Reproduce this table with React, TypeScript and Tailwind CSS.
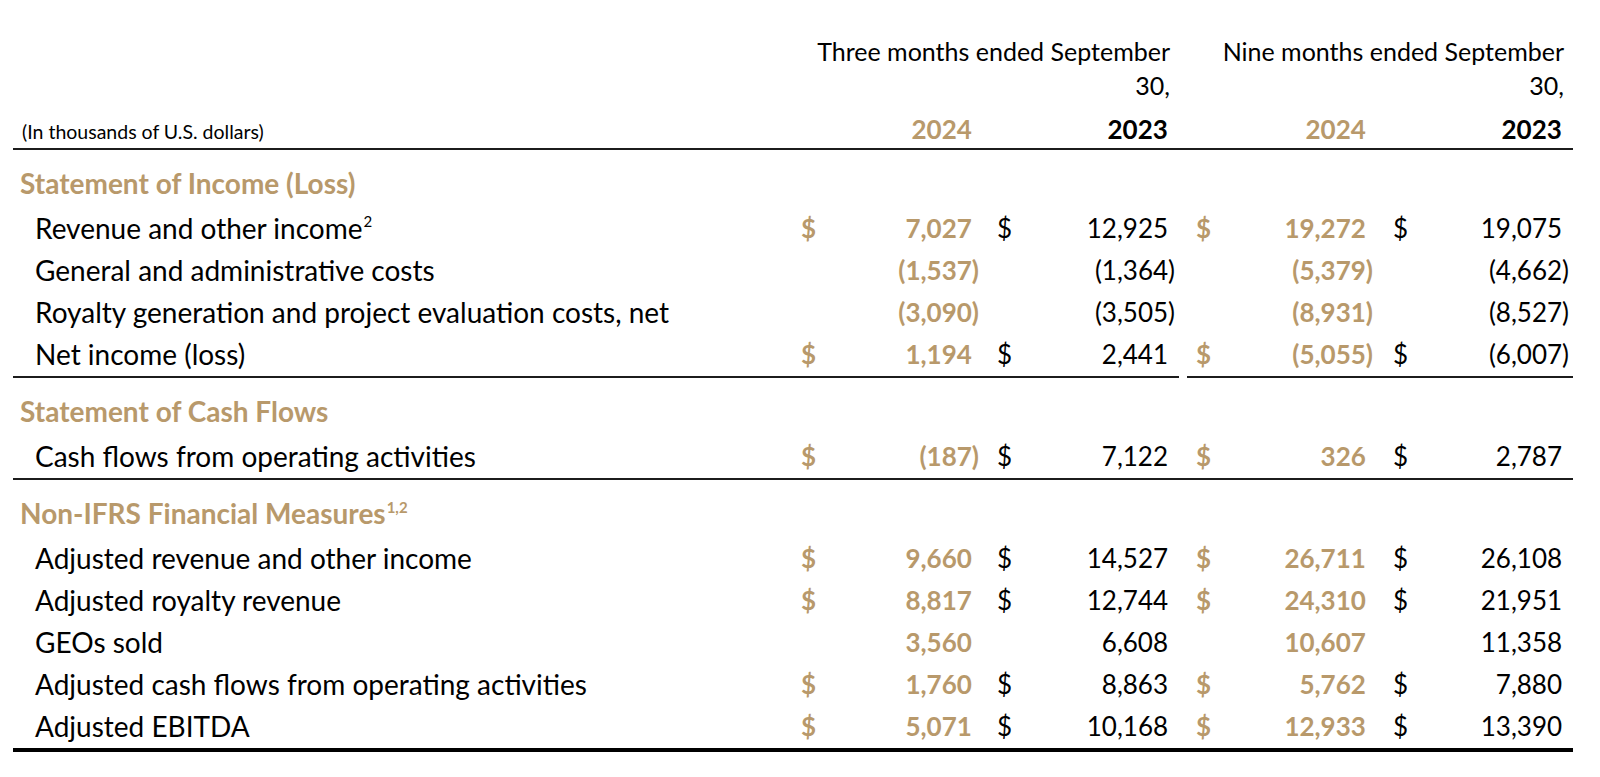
import React from "react";

const COLS =
  "grid grid-cols-[782px_35px_153px_47px_149px_8px_38px_152px_43px_153px]";

type Row = {
  label: string;
  sup?: string;
  cur?: boolean;
  v: [string, string, string, string];
  line?: "split" | "full" | "thick";
};

type Section = { title: string; sup?: string; rows: Row[] };

const sections: Section[] = [
  {
    title: "Statement of Income (Loss)",
    rows: [
      { label: "Revenue and other income", sup: "2", cur: true, v: ["7,027", "12,925", "19,272", "19,075"] },
      { label: "General and administrative costs", v: ["(1,537)", "(1,364)", "(5,379)", "(4,662)"] },
      { label: "Royalty generation and project evaluation costs, net", v: ["(3,090)", "(3,505)", "(8,931)", "(8,527)"] },
      { label: "Net income (loss)", cur: true, v: ["1,194", "2,441", "(5,055)", "(6,007)"], line: "split" },
    ],
  },
  {
    title: "Statement of Cash Flows",
    rows: [
      { label: "Cash flows from operating activities", cur: true, v: ["(187)", "7,122", "326", "2,787"], line: "full" },
    ],
  },
  {
    title: "Non-IFRS Financial Measures",
    sup: "1,2",
    rows: [
      { label: "Adjusted revenue and other income", cur: true, v: ["9,660", "14,527", "26,711", "26,108"] },
      { label: "Adjusted royalty revenue", cur: true, v: ["8,817", "12,744", "24,310", "21,951"] },
      { label: "GEOs sold", v: ["3,560", "6,608", "10,607", "11,358"] },
      { label: "Adjusted cash flows from operating activities", cur: true, v: ["1,760", "8,863", "5,762", "7,880"] },
      { label: "Adjusted EBITDA", cur: true, v: ["5,071", "10,168", "12,933", "13,390"], line: "thick" },
    ],
  },
];

function Num({ v, gold, bold }: { v: string; gold?: boolean; bold?: boolean }) {
  const neg = v.startsWith("(");
  return (
    <div
      className={`flex items-center justify-end pr-[4px] ${gold ? "text-[#b8996b] font-bold" : "text-black"} ${bold ? "font-bold" : ""}`}
    >
      {v}
      {!neg && <span className="invisible">)</span>}
    </div>
  );
}

function Dollar({ show, gold, pl }: { show?: boolean; gold?: boolean; pl: string }) {
  return (
    <div className={`flex items-center ${pl} ${gold ? "text-[#b8996b] font-bold" : "text-black"}`}>
      {show ? "$" : ""}
    </div>
  );
}

function DataRow({ row }: { row: Row }) {
  const split = row.line === "split";
  const cell = split ? "border-b-2 border-[#1c1c1c] pb-[3px]" : "pb-[3px]";
  const rowStyle =
    row.line === "full"
      ? "h-[44px] border-b-2 border-[#1c1c1c]"
      : row.line === "thick"
        ? "h-[46px] border-b-4 border-black"
        : split
          ? "h-[44px]"
          : "h-[42px]";
  return (
    <div className={`${COLS} ${rowStyle}`}>
      <div className={`flex items-center pl-[22px] text-[28px] text-black ${cell}`}>
        <span>
          {row.label}
          {row.sup && <sup className="text-[15px] -top-[0.75em] ml-[1px]">{row.sup}</sup>}
        </span>
      </div>
      <div className={`flex ${cell}`}><Dollar show={row.cur} gold pl="pl-[6px]" /></div>
      <div className={`flex justify-end ${cell}`}><Num v={row.v[0]} gold /></div>
      <div className={`flex ${cell}`}><Dollar show={row.cur} pl="pl-[14px]" /></div>
      <div className={`flex justify-end ${cell}`}><Num v={row.v[1]} /></div>
      <div />
      <div className={`flex ${cell}`}><Dollar show={row.cur} gold pl="pl-[9px]" /></div>
      <div className={`flex justify-end ${cell}`}><Num v={row.v[2]} gold /></div>
      <div className={`flex ${cell}`}><Dollar show={row.cur} pl="pl-[16px]" /></div>
      <div className={`flex justify-end ${cell}`}><Num v={row.v[3]} /></div>
    </div>
  );
}

export default function App() {
  return (
    <div className="w-[1600px] h-[777px] bg-white overflow-hidden [font-family:Lato,'Open_Sans',sans-serif] text-[26px] leading-[30px]">
      <div className="ml-[13px] w-[1560px] pt-[34px]">
        {/* Period headings */}
        <div className={`${COLS} leading-[34px] text-[25px] text-black`}>
          <div />
          <div className="col-span-4 text-right pr-[9px]">
            Three months ended September
            <br />
            30,
          </div>
          <div />
          <div className="col-span-4 text-right pr-[9px]">
            Nine months ended September
            <br />
            30,
          </div>
        </div>

        {/* Year row */}
        <div className={`${COLS} h-[48px] border-b-2 border-[#1c1c1c]`}>
          <div className="flex items-end pl-[9px] pb-[4px] text-[19.5px] leading-[24px] text-black">
            (In thousands of U.S. dollars)
          </div>
          <div />
          <div className="flex items-end justify-end pb-[4px]"><Num v="2024" gold /></div>
          <div />
          <div className="flex items-end justify-end pb-[4px]"><Num v="2023" bold /></div>
          <div />
          <div />
          <div className="flex items-end justify-end pb-[4px]"><Num v="2024" gold /></div>
          <div />
          <div className="flex items-end justify-end pb-[4px]"><Num v="2023" bold /></div>
        </div>

        {sections.map((s) => (
          <div key={s.title}>
            <div className="h-[58px] flex items-end pb-[10px] pl-[7px] text-[28px] font-bold text-[#b8996b]">
              <span>
                {s.title}
                {s.sup && <sup className="text-[15px] -top-[0.75em] ml-[1px]">{s.sup}</sup>}
              </span>
            </div>
            {s.rows.map((r) => (
              <DataRow key={r.label} row={r} />
            ))}
          </div>
        ))}
      </div>
    </div>
  );
}
